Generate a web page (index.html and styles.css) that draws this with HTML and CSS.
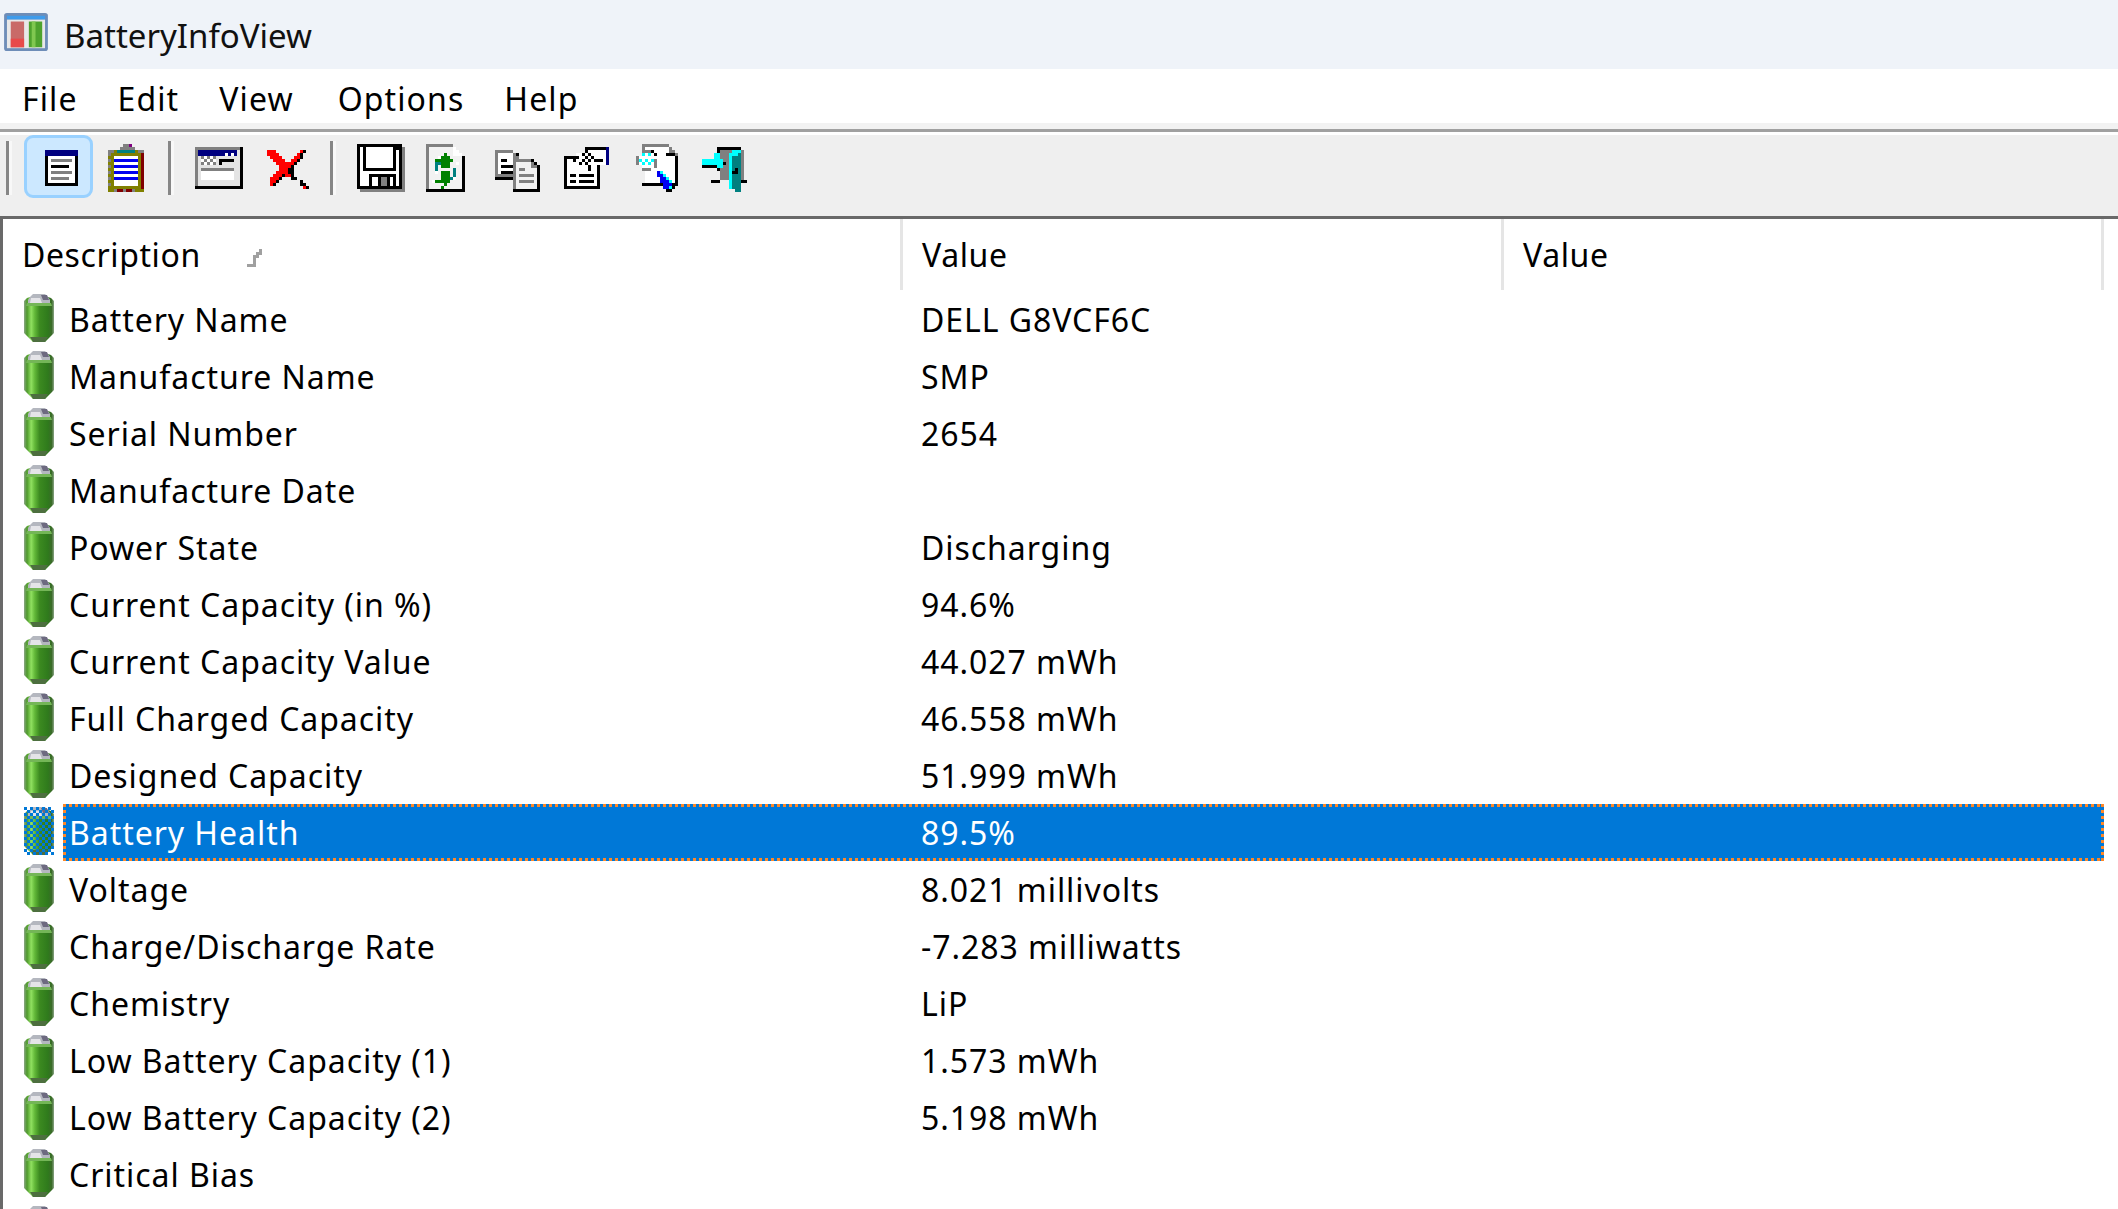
FILE: index.html
```html
<!DOCTYPE html>
<html lang="en">
<head>
<meta charset="utf-8">
<title>BatteryInfoView</title>
<link rel="stylesheet" href="styles.css">
</head>
<body>
<svg class="defs" width="0" height="0" aria-hidden="true">
  <defs>
    <linearGradient id="cell" x1="0" x2="1" y1="0" y2="0">
      <stop offset="0" stop-color="#8aa585"/><stop offset=".1" stop-color="#4f9a2c"/><stop offset=".24" stop-color="#90e060"/><stop offset=".36" stop-color="#62b838"/><stop offset=".52" stop-color="#3c8a20"/><stop offset=".8" stop-color="#2f7a1c"/><stop offset=".92" stop-color="#3a6b28"/><stop offset="1" stop-color="#8aa585"/>
    </linearGradient>
    <pattern id="dither" width="6" height="6" patternUnits="userSpaceOnUse">
      <rect width="3" height="3" fill="#0078d7"/><rect x="3" y="3" width="3" height="3" fill="#0078d7"/>
    </pattern>
    <symbol id="battery" viewBox="0 0 30 48">
      <path d="M6 3h18l3 1 3 3v32l-3 3-3 3-3 3H9l-3-3-3-3-3-3V7l3-3z" fill="url(#cell)"/>
      <path d="M6 43h18l-3 5H9z" fill="#4d6f3f"/>
      <path d="M3 9h24l1 3H2z" fill="#74b657"/>
      <path d="M9 0h12l3 3 2 3v3H4V6l2-3z" fill="#b4b7bf"/>
      <path d="M7 4h9l2 5H6z" fill="#e4e4e8"/><path d="M17 1h6l2 5h-6z" fill="#6d6a80"/>
    </symbol>
  </defs>
</svg>

<header class="titlebar">
  <svg class="app-icon" width="48" height="40" viewBox="0 0 48 42"><rect x="1" y="1" width="46" height="40" rx="3" fill="#6e8db8"/><rect x="4" y="4" width="40" height="4" fill="#3f9cec"/><rect x="4" y="8" width="40" height="30" fill="#e8e8e8"/><rect x="8" y="10" width="14" height="27" fill="#c96a68"/><rect x="8" y="28" width="14" height="9" fill="#e84a4a"/><rect x="27" y="10" width="14" height="27" fill="#4ea32e"/><rect x="30" y="10" width="4" height="27" fill="#80c850"/></svg>
  <span class="app-name">BatteryInfoView</span>
</header>

<nav class="menubar">
  <span class="menu-item">File</span>
  <span class="menu-item">Edit</span>
  <span class="menu-item">View</span>
  <span class="menu-item">Options</span>
  <span class="menu-item">Help</span>
</nav>
<div class="menu-rule"></div>

<div class="toolbar">
  <span class="sep first"></span>
  <span class="tool-active">
    <svg width="33" height="48" viewBox="0 0 11 16" shape-rendering="crispEdges"><path d="M0 2h11v12H0z" fill="#000"/><path d="M0 2h11v2H0z" fill="#000080"/><path d="M1 4h9v9H1z" fill="#fff"/><path d="M2 5h7v1H2zM2 9h7v1H2zM2 11h6v1H2z" fill="#808080"/><path d="M2 7h6v1H2z" fill="#000"/></svg>
  </span>
  <svg class="i-clip" width="36" height="48" viewBox="0 0 12 16" shape-rendering="crispEdges"><path d="M0 2h12v14H0z" fill="#808000"/><path d="M0 3h1v1H0zM0 5h1v1H0zM0 7h1v1H0zM0 9h1v1H0zM0 11h1v1H0zM0 13h1v1H0zM2 15h1v1H2zM5 15h1v1H5zM8 15h1v1H8zM0 2h2v1H0zM10 2h2v1h-2z" fill="#808080"/><path d="M11 3h1v12h-1zM3 15h2v1H3zM6 15h2v1H6z" fill="#800000"/><path d="M1 3h10v12H1z" fill="#808000"/><path d="M2 4h8v10H2z" fill="#fff"/><path d="M2 5h8v1H2zM2 7h8v1H2zM2 9h8v1H2zM2 11h8v1H2z" fill="#0000f0"/><path d="M4 1h5v1H4z" fill="#808080"/><path d="M5 0h2v1H5z" fill="#808080"/><path d="M7 0h1v1H7z" fill="#800080"/><path d="M3 2h6v1H3z" fill="#008080"/></svg>
  <span class="sep second"></span>
  <svg class="i-win" width="48" height="48" viewBox="0 0 16 16" shape-rendering="crispEdges"><path d="M0 1h16v14H0z" fill="#808080"/><path d="M15 1h1v14h-1zM0 14h16v1H0z" fill="#000"/><path d="M1 2h14v12H1z" fill="#e4e4e4"/><path d="M1 2h13v2H1z" fill="#000080"/><path d="M10 3h1v1h-1zM12 3h1v1h-1z" fill="#fff"/><path d="M2 4h5v3H2z" fill="#fff"/><path d="M2 4h1v1H2zM4 4h1v1H4zM6 4h1v1H6zM3 5h1v1H3zM5 5h1v1H5zM2 6h1v1H2zM4 6h1v1H4zM6 6h1v1H6z" fill="#808080"/><path d="M8 5h5v1H8zM8 5h1v2H8z" fill="#000"/><path d="M2 8h11v1H2z" fill="#808080"/><path d="M2 9h11v3H2z" fill="#fff"/></svg>
  <svg class="i-x" width="42" height="48" viewBox="0 0 14 16" shape-rendering="crispEdges"><path d="M0 2h3v1H0zM11 2h1v1h-1zM0 3h4v1H0zM10 3h1v1h-1zM1 4h4v1H1zM9 4h2v1H9zM2 5h4v1H2zM8 5h2v1H8zM3 6h6v1H3zM4 7h4v1H4zM4 8h3v1H4zM3 9h4v1H3zM2 10h3v1H2zM6 10h2v1H6zM1 11h3v1H1zM1 12h2v1H1zM1 13h1v1H1zM12 14h1v1h-1z" fill="#f00"/><path d="M12 2h1v1h-1zM11 3h1v1h-1zM11 4h1v1h-1zM10 5h1v1h-1zM9 6h1v1H9zM8 7h1v1H8zM7 8h2v1H7zM7 9h2v1H7zM5 10h1v1H5zM8 10h1v1H8zM4 11h1v1H4zM8 11h2v1H8zM3 12h1v1H3zM2 13h1v1H2zM11 12h1v1h-1zM11 13h2v1h-2zM13 14h1v1h-1z" fill="#000"/></svg>
  <span class="sep third"></span>
  <svg class="i-save" width="48" height="48" viewBox="0 0 16 16" shape-rendering="crispEdges"><path d="M1 1h15v15H1z" fill="#808080"/><path d="M0 0h15v15H0z" fill="#000"/><path d="M1 1h13v13H1z" fill="#fff"/><path d="M2 0h11v9H2z" fill="#000"/><path d="M3 1h9v7H3z" fill="#fff"/><path d="M13 1h1v1h-1z" fill="#000"/><path d="M4 10h9v5H4z" fill="#000"/><path d="M5 11h7v3H5z" fill="#fff"/><path d="M8 11h2v3H8z" fill="#808080"/><path d="M7 11h1v3H7zM10 11h1v3h-1z" fill="#000"/></svg>
  <svg class="i-refresh" width="39" height="48" viewBox="0 0 13 16" shape-rendering="crispEdges"><path d="M0 0h9v1h1v1h1v1h1v1h1v12H0z" fill="#000"/><path d="M0 0h9v1H1v14H0z" fill="#808080"/><path d="M1 1h8v3h3v11H1z" fill="#f2f2f2"/><path d="M9 1h1v1h1v1h1v1H9z" fill="#fff"/><path d="M4 4h1v1H4zM7 6h1v1H7zM3 9h1v1H3zM9 11h1v1H9zM2 12h1v1H2zM10 6h1v1h-1z" fill="#fff"/><path d="M6 3h1v1h1v1h1v1H8v2H5V6H3V5h2V4h1z" fill="#008000"/><path d="M5 9h3v2h1v1H8v1H7v1H6v1H5v-1H6v-1H3v-1h2z" fill="#008000"/><path d="M3 6h2v1H4v2H3zM9 8h1v3H9v1H8v-1h1z" fill="#008080"/></svg>
  <svg class="i-copy" width="45" height="48" viewBox="0 0 15 16" shape-rendering="crispEdges"><path d="M0 2h6v1h1v1h1v1h1v6H0z" fill="#808080"/><path d="M1 3h5v2h2v5H1z" fill="#fff"/><path d="M2 5h2v1H2zM2 7h5v1H2zM2 9h4v1H2zM0 11h6v1H0zM7 3h1v1H7z" fill="#000"/><path d="M6 5h6v1h1v1h1v1h1v8H6z" fill="#808080"/><path d="M12 5h1v1h1v1h1v1h-1V7h-1V6h-1z" fill="#000"/><path d="M14 8h1v8H6v-1h8z" fill="#000"/><path d="M7 6h5v2h2v7H7z" fill="#f2f2f2"/><path d="M8 8h2v1H8zM8 10h5v1H8zM8 12h5v1H8z" fill="#808080"/></svg>
  <svg class="i-props" width="45" height="48" viewBox="0 0 15 16" shape-rendering="crispEdges"><path d="M0 4h12v11H0z" fill="#000"/><path d="M1 5h10v9H1z" fill="#fff"/><path d="M2 10h2v1H2zM5 10h5v1H5zM2 12h2v1H2zM5 12h5v1H5z" fill="#000"/><path d="M7 1h7v1h1v4h-1v1H9v1H8V7H7V6H6V5H5V4H4V3h3z" fill="#fff"/><path d="M7 1h7v1H7zM7 2h1v1H7zM6 3h1v1H6zM8 3h1v1H8zM2 4h1v1H2zM4 4h1v1H4zM7 4h1v1H7zM9 4h1v1H9zM3 5h1v1H3zM6 5h1v1H6zM8 5h1v1H8zM5 6h1v1H5zM7 6h1v1H7zM8 7h1v2H8zM10 5h3v1h-3z" fill="#000"/><path d="M14 1h1v6h-1z" fill="#000080"/></svg>
  <svg class="i-find" width="42" height="48" viewBox="0 0 14 16" shape-rendering="crispEdges"><path d="M2 0h9v1h1v1h1v1h1v11h-1V4h-2V2h-1V1H3v2H2z" fill="#808080"/><path d="M3 1h8v3h2v10H3z" fill="#fff"/><path d="M10 3h3v1h1v10h-1V4h-3zM2 13h7v1H2z" fill="#000"/><path d="M2 3h3v1h1v3H5v1H2V7H1V4h1z" fill="#fff"/><path d="M2 3h1v1H2zM4 3h1v1H4zM1 5h1v1H1zM3 5h1v1H3zM5 5h1v1H5zM2 6h1v1H2zM4 6h1v1H4z" fill="#00ffff"/><path d="M2 2h3v1H2zM0 4h1v3H0zM2 8h3v1H2zM6 5h1v3H6z" fill="#808080"/><path d="M5 2h1v1h1v1H6V3H5z" fill="#000"/><path d="M7 9h2v1h1v1h1v1h1v1h1v2h-1v1h-2v-1h-1v-1H9v-1H8v-2H7z" fill="#0000f0"/><path d="M8 9h1v1h1v1h1v1h1v1h-1v-1h-1v-1H9v-1H8zM11 14h1v1h-1z" fill="#00ffff"/><path d="M10 15h2v1h-2zM12 13h1v2h-1z" fill="#000"/></svg>
  <svg class="i-exit" width="45" height="48" viewBox="0 0 15 16" shape-rendering="crispEdges"><path d="M5 1h8v1H6v2H5z" fill="#000"/><path d="M6 2h8v10H6z" fill="#808080"/><path d="M9 3h4v13h-2v-1H9z" fill="#008080"/><path d="M9 4h1v11H9zM10 3h2v1h-2zM10 2h3v1h-3zM9 3h2v1H9z" fill="#00ffff"/><path d="M11 8h1v2h-1zM10 9h1v1h-1z" fill="#000"/><path d="M4 3h2v1H4zM0 5h4V3h1v1h1v1h1v1h1v1H7v1H6v1H5V7H0z" fill="#00ffff"/><path d="M0 7h5v1H0zM5 8h1v1H5zM7 6h1v1H7zM3 12h3v1H3zM13 12h2v1h-2z" fill="#000"/></svg>
</div>

<main class="list">
  <div class="list-head">
    <div class="col-a"><span class="head-label">Description</span><svg class="sort" width="15" height="18" viewBox="0 0 15 18" shape-rendering="crispEdges"><path d="M12 0h3v6h-3v3H9v9H0v-3h6V6h3V3h3z" fill="#a0a0a0"/></svg></div>
    <div class="col-b"><span class="head-label">Value</span></div>
    <div class="col-c"><span class="head-label">Value</span></div>
  </div>

  <div class="row"><svg class="cell-icon"><use href="#battery"/></svg><div class="row-body"><span class="c1">Battery Name</span><span class="c2">DELL G8VCF6C</span></div></div>
  <div class="row"><svg class="cell-icon"><use href="#battery"/></svg><div class="row-body"><span class="c1">Manufacture Name</span><span class="c2">SMP</span></div></div>
  <div class="row"><svg class="cell-icon"><use href="#battery"/></svg><div class="row-body"><span class="c1">Serial Number</span><span class="c2">2654</span></div></div>
  <div class="row"><svg class="cell-icon"><use href="#battery"/></svg><div class="row-body"><span class="c1">Manufacture Date</span><span class="c2"></span></div></div>
  <div class="row"><svg class="cell-icon"><use href="#battery"/></svg><div class="row-body"><span class="c1">Power State</span><span class="c2">Discharging</span></div></div>
  <div class="row"><svg class="cell-icon"><use href="#battery"/></svg><div class="row-body"><span class="c1">Current Capacity (in %)</span><span class="c2">94.6%</span></div></div>
  <div class="row"><svg class="cell-icon"><use href="#battery"/></svg><div class="row-body"><span class="c1">Current Capacity Value</span><span class="c2">44.027 mWh</span></div></div>
  <div class="row"><svg class="cell-icon"><use href="#battery"/></svg><div class="row-body"><span class="c1">Full Charged Capacity</span><span class="c2">46.558 mWh</span></div></div>
  <div class="row"><svg class="cell-icon"><use href="#battery"/></svg><div class="row-body"><span class="c1">Designed Capacity</span><span class="c2">51.999 mWh</span></div></div>
  <div class="row selected"><svg class="cell-icon" viewBox="0 0 30 48"><use href="#battery" width="30" height="48"/><path d="M0 0h30v48H0z" fill="url(#dither)"/></svg><div class="row-body"><span class="c1">Battery Health</span><span class="c2">89.5%</span></div></div>
  <div class="row"><svg class="cell-icon"><use href="#battery"/></svg><div class="row-body"><span class="c1">Voltage</span><span class="c2">8.021 millivolts</span></div></div>
  <div class="row"><svg class="cell-icon"><use href="#battery"/></svg><div class="row-body"><span class="c1">Charge/Discharge Rate</span><span class="c2">-7.283 milliwatts</span></div></div>
  <div class="row"><svg class="cell-icon"><use href="#battery"/></svg><div class="row-body"><span class="c1">Chemistry</span><span class="c2">LiP</span></div></div>
  <div class="row"><svg class="cell-icon"><use href="#battery"/></svg><div class="row-body"><span class="c1">Low Battery Capacity (1)</span><span class="c2">1.573 mWh</span></div></div>
  <div class="row"><svg class="cell-icon"><use href="#battery"/></svg><div class="row-body"><span class="c1">Low Battery Capacity (2)</span><span class="c2">5.198 mWh</span></div></div>
  <div class="row"><svg class="cell-icon"><use href="#battery"/></svg><div class="row-body"><span class="c1">Critical Bias</span><span class="c2"></span></div></div>
  <div class="row"><svg class="cell-icon"><use href="#battery"/></svg><div class="row-body"></div></div>
</main>
</body>
</html>
```
FILE: styles.css
```css
* { box-sizing: border-box; }
html, body { margin: 0; height: 100%; overflow: hidden; background: #fff; }
body {
  font-family: "Noto Sans", "Open Sans", "Liberation Sans", sans-serif;
  font-size: 32px;
  letter-spacing: .95px;
  color: #000;
  display: flex;
  flex-direction: column;
  height: 1209px;
}
.defs { position: absolute; }

.titlebar { height: 69px; background: #eff3f9; display: flex; align-items: center; padding-left: 2px; flex: none; }
.app-icon { flex: none; margin-top: -5px; filter: blur(.7px); }
.app-name { margin-left: 14px; padding-top: 2px; font-size: 33px; color: #111; letter-spacing: 0; }

.menubar { height: 54px; background: #fff; display: flex; padding: 5px 0 0 22px; align-items: center; flex: none; }
.menu-item { margin-right: 40px; line-height: 1; letter-spacing: 1.1px; }
.menu-item:nth-child(3) { margin-right: 44px; }

.menu-rule { height: 9px; flex: none; background: #f2f2f2; border-bottom: 3px solid #a0a0a0; }
.toolbar { height: 87px; flex: none; background: #efefef; border-top: 3px solid #fff; border-bottom: 3px solid #696969; display: flex; align-items: flex-start; }
.toolbar > svg { margin-top: 9px; flex: none; }

.sep { flex: none; width: 6px; height: 54px; margin-top: 6px; border-left: 3px solid #868686; border-right: 3px solid #f8f8f8; }
.sep.first { margin-left: 6px; }
.sep.second { margin-left: 24px; }
.sep.third { margin-left: 21px; }
.tool-active { flex: none; width: 69px; height: 63px; margin-left: 12px; padding: 6px 0 0 18px; background: #cce8ff; border: 3px solid #99d1ff; border-radius: 9px; }
.tool-active svg { display: block; }
.i-clip { margin-left: 15px; }
.i-win { margin-left: 21px; }
.i-x { margin-left: 24px; }
.i-save { margin-left: 21px; }
.i-refresh { margin-left: 21px; }
.i-copy { margin-left: 30px; }
.i-props { margin-left: 24px; }
.i-find { margin-left: 27px; }
.i-exit { margin-left: 24px; }

.list { flex: 1; min-height: 0; overflow: hidden; border-left: 3px solid #696969; background: #fff; }
.list-head { display: flex; height: 72px; padding-bottom: 1px; }
.list-head > div { height: 71px; display: flex; align-items: center; border-right: 3px solid #e5e5e5; padding-left: 19px; flex: none; }
.head-label { letter-spacing: .6px; }
.col-a { width: 900px; }
.col-b { width: 601px; }
.col-c { width: 600px; }
.sort { margin-left: 46px; margin-top: 6px; }

.row { height: 57px; display: flex; align-items: flex-start; }
.cell-icon { width: 30px; height: 48px; flex: none; margin: 3px 0 0 21px; }
.row-body { margin-left: 9px; width: 2041px; height: 57px; display: flex; align-items: center; }
.c1 { width: 858px; padding-left: 6px; flex: none; white-space: nowrap; }
.c2 { white-space: nowrap; }

.selected .row-body {
  color: #fff;
  background:
    repeating-linear-gradient(90deg, #ff8727 0 3px, transparent 3px 6px) top / 100% 3px no-repeat,
    repeating-linear-gradient(90deg, #ff8727 0 3px, transparent 3px 6px) bottom / 100% 3px no-repeat,
    repeating-linear-gradient(0deg, #ff8727 0 3px, transparent 3px 6px) left / 3px 100% no-repeat,
    repeating-linear-gradient(0deg, #ff8727 0 3px, transparent 3px 6px) right / 3px 100% no-repeat,
    #0078d7;
}
```
